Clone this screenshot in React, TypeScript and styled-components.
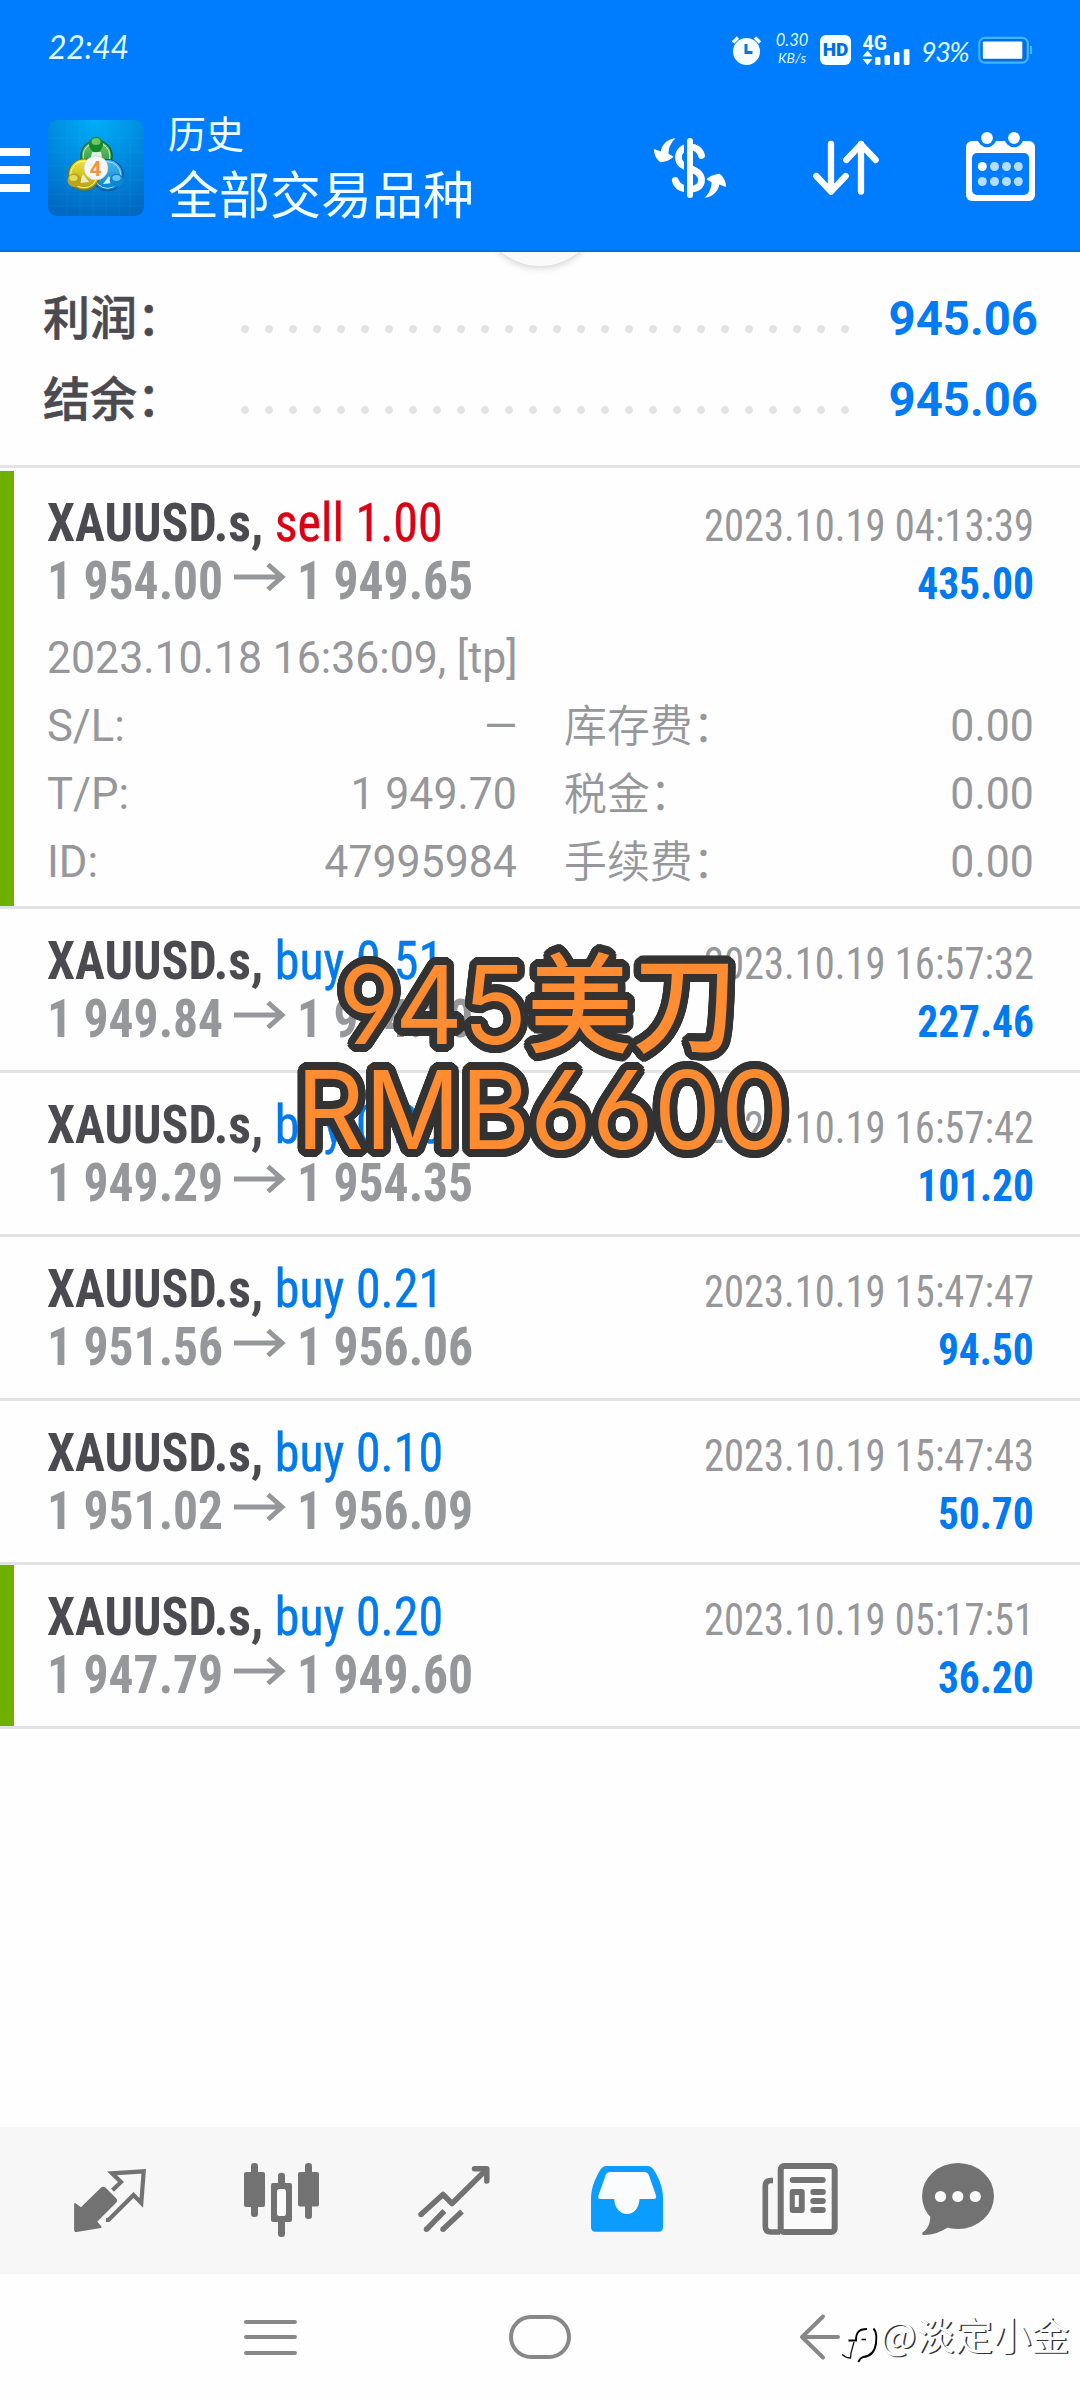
import React from 'react';
import styled, { createGlobalStyle } from 'styled-components';

const BLUE = '#007dff';
const INK = '#4b4a50';
const GREY = '#96979b';
const LINE = '#e3e3e3';
const TAB = '#727272';

const CJK = '"Noto Sans CJK SC", sans-serif';
const CONDENSED = '"Roboto Condensed", Roboto, sans-serif';

const Global = createGlobalStyle`
  * { box-sizing: border-box; }
  body { margin: 0; background: #fefefe; }
`;

const Screen = styled.div`
  position: relative;
  width: 1080px;
  height: 2400px;
  display: flex;
  flex-direction: column;
  overflow: hidden;
  background: #fefefe;
  font-family: Roboto, ${CJK};
  white-space: nowrap;
`;

/* ---------- header ---------- */

const Header = styled.header`
  position: relative;
  z-index: 2;
  height: 252px;
  flex: none;
  background: ${BLUE};
  color: #f0ffff;
  border-bottom: 2px solid #0070dc;
`;

const StatusBar = styled.div`
  height: 84px;
  padding: 16px 47px 0 48px;
  display: flex;
  align-items: center;
`;

const Clock = styled.span`
  flex: 1;
  padding-bottom: 6px;
  font: italic 400 32px/40px Lato, sans-serif;
  letter-spacing: -0.3px;
  color: #dcfaff;
`;

const NetSpeed = styled.div`
  width: 34px;
  margin: 0 11px 0 12px;
  padding-bottom: 2px;
  display: flex;
  flex-direction: column;
  align-items: center;
  font: italic 400 16.5px/18px Lato, sans-serif;
  color: #dcfaff;
`;

const SpeedUnit = styled.span`
  font-size: 14px;
`;

const Percent = styled.span`
  width: 49px;
  margin: 0 8px 0 9px;
  padding: 4px 0 0 1px;
  font: italic 400 27px/36px Lato, sans-serif;
  letter-spacing: -1.4px;
  color: #dcfaff;
`;

const HdBadge = styled.span`
  width: 31px;
  height: 30px;
  margin-right: 11px;
  display: flex;
  align-items: center;
  justify-content: center;
  border-radius: 6px;
  background: #f4ffff;
  color: #006fe0;
  font: 900 19px/30px Roboto, sans-serif;
`;

const AppBar = styled.div`
  height: 168px;
  padding-right: 29px;
  display: flex;
  align-items: center;
`;

const MenuButton = styled.div`
  width: 30px;
  margin: 4px 18px 0 0;
  display: flex;
  flex-direction: column;
  gap: 10px;
`;

const MenuBar = styled.span`
  height: 8px;
  background: #fff;
`;

const Titles = styled.div`
  flex: 1;
  margin-left: 24px;
  align-self: flex-start;
  padding-top: 23px;
  font-family: ${CJK};
`;

const Subtitle = styled.div`
  font-size: 38px;
  line-height: 50px;
`;

const Title = styled.div`
  margin-top: 3px;
  font-size: 51px;
  line-height: 64px;
`;

const Actions = styled.div`
  display: flex;
  gap: 55px;
`;

const PullKnob = styled.div`
  position: absolute;
  z-index: 1;
  left: 480px;
  top: 146px;
  width: 120px;
  height: 120px;
  border-radius: 50%;
  background: #fafafa;
  box-shadow: 0 2px 7px rgba(0, 0, 0, 0.18);
`;

/* ---------- summary ---------- */

const Summary = styled.section`
  height: 216px;
  padding: 22px 42px 0 43px;
  border-bottom: 3px solid ${LINE};
`;

const SummaryRow = styled.div`
  height: 81px;
  display: flex;
  align-items: center;
`;

const SummaryLabel = styled.span`
  width: 190px;
  font: 500 47px/81px ${CJK};
  color: ${INK};
  -webkit-text-stroke: 0.6px ${INK};
`;

const Dots = styled.span`
  width: 624px;
  height: 24px;
  margin-top: 29px;
  background: radial-gradient(circle at center, #e3e3e3 3.6px, transparent 4.3px) 0 0 / 24px 24px;
`;

const SummaryValue = styled.span`
  flex: 1;
  padding-top: 10px;
  text-align: right;
  font: 700 47.3px/71px Roboto, sans-serif;
  color: #007af5;
`;

/* ---------- deals ---------- */

const Deals = styled.main`
  flex: 1;
  padding-top: 3px;
`;

const Deal = styled.article<{ $marked?: boolean; $open?: boolean }>`
  padding: 23px 46px ${p => (p.$open ? 10 : 22)}px ${p => (p.$marked ? 33 : 47)}px;
  border-left: ${p => (p.$marked ? '14px solid #6eb000' : 'none')};
`;

const Divider = styled.div`
  height: 3px;
  background: ${LINE};
`;

const DealLine = styled.div`
  height: 58px;
  display: flex;
  justify-content: space-between;
  align-items: baseline;
`;

const Symbol = styled.span`
  font: 700 54px/58px ${CONDENSED};
  color: ${INK};
  transform: scaleX(0.926);
  transform-origin: left;
`;

const Order = styled.span<{ $side: string }>`
  font-weight: 400;
  -webkit-text-stroke: 0.4px;
  color: ${p => (p.$side === 'sell' ? '#dc0014' : '#007aec')};
`;

const Stamp = styled.span`
  font: 400 44px/44px ${CONDENSED};
  color: ${GREY};
  transform: scaleX(0.922);
  transform-origin: right;
`;

const Profit = styled.span`
  font: 700 44px/44px ${CONDENSED};
  color: #007af0;
  transform: scaleX(0.942);
  transform-origin: right;
`;

const Prices = styled.div`
  display: flex;
  align-items: baseline;
`;

const Price = styled.span`
  width: 187px;
  font: 700 54px/58px ${CONDENSED};
  color: ${GREY};
  transform: scaleX(0.918);
  transform-origin: left;
`;

const ArrowBox = styled.span`
  width: 63px;
  display: flex;
`;

const Details = styled.div`
  margin-top: 14px;
  display: grid;
  grid-template-columns: 470px 470px;
  grid-auto-rows: 68px;
  column-gap: 47px;
  font: 400 44px/68px Roboto, sans-serif;
  color: ${GREY};
`;

const Opened = styled.div`
  grid-column: 1 / -1;
  transform: scaleX(0.973);
  transform-origin: left;
`;

const Field = styled.div`
  height: 68px;
  display: flex;
  justify-content: space-between;
`;

const Key = styled.span<{ $cjk?: boolean }>`
  font-family: ${p => (p.$cjk ? CJK : 'Roboto, sans-serif')};
  font-weight: ${p => (p.$cjk ? 350 : 400)};
  line-height: ${p => (p.$cjk ? 62 : 68)}px;
  transform: scaleX(${p => (p.$cjk ? 0.975 : 0.99)});
  transform-origin: left;
`;

const Value = styled.span`
  transform: scaleX(0.973);
  transform-origin: right;
`;

/* ---------- bottom bars ---------- */

const Tabs = styled.nav`
  height: 147px;
  padding: 0 0 1px 60px;
  display: grid;
  grid-template-columns: 171px 172.5px 173px 173.5px 158px 100px;
  align-items: center;
  background: #f7f7f7;
`;

const NavBar = styled.footer`
  height: 126px;
  padding: 0 239px 0 240px;
  display: grid;
  grid-template-columns: 265px 292px 44px;
  align-items: center;
`;

/* ---------- overlays ---------- */

const ring = Array.from({ length: 32 }, (_, i) => {
  const a = (i / 32) * Math.PI * 2;
  return `${(Math.cos(a) * 7.7).toFixed(2)}px ${(Math.sin(a) * 7.7).toFixed(2)}px 0 #333`;
}).join(',');

const Caption = styled.div`
  position: absolute;
  z-index: 3;
  left: 0;
  top: 952px;
  width: 1080px;
  text-align: center;
  font: 400 108px/105px Inter, ${CJK};
  font-feature-settings: 'cv03', 'cv04';
  color: #ff8c30;
  text-shadow: ${ring};
`;

const CaptionLine = styled.div<{ $scale: number; $shift: number }>`
  height: 105px;
  transform: translateX(${p => p.$shift}px) scaleX(${p => p.$scale});
`;

const CaptionHan = styled.span`
  font-weight: 500;
`;

const Watermark = styled.div`
  position: absolute;
  z-index: 3;
  left: 839px;
  top: 2309px;
  display: flex;
  align-items: flex-start;
  gap: 1px;
  font: 400 38.3px/50px ${CJK};
  color: #fff;
  text-shadow: 1.5px 1px 0.5px #333;

  svg {
    margin-top: 11px;
  }
`;

/* ---------- drawings ---------- */

const Logo = () => (
  <svg width="96" height="96" viewBox="48 120 96 96">
    <defs>
      <radialGradient id="tile" cx="50%" cy="0%" r="100%">
        <stop offset="0" stopColor="#00aef8" />
        <stop offset="0.5" stopColor="#008be0" />
        <stop offset="1" stopColor="#0069c2" />
      </radialGradient>
      <linearGradient id="green" x1="0" y1="0" x2="0" y2="1">
        <stop offset="0" stopColor="#7cc878" />
        <stop offset="1" stopColor="#13862c" />
      </linearGradient>
      <linearGradient id="yellow" x1="0" y1="0" x2="0" y2="1">
        <stop offset="0" stopColor="#efe63c" />
        <stop offset="1" stopColor="#b5a00c" />
      </linearGradient>
      <linearGradient id="blue" x1="0" y1="0" x2="0" y2="1">
        <stop offset="0" stopColor="#4cb9f0" />
        <stop offset="1" stopColor="#0080cf" />
      </linearGradient>
    </defs>
    <rect x="48" y="120" width="96" height="96" rx="9" fill="url(#tile)" />
    <path
      d="M67 120v96M80 120v96M93 120v96M106 120v96M119 120v96M130 120v96M48 138h96M48 152h96M48 166h96M48 180h96M48 194h96M48 206h96"
      stroke="#3db8f5"
      strokeOpacity="0.14"
      strokeWidth="0.8"
    />
    <circle cx="96.5" cy="156" r="15.5" fill="url(#green)" stroke="#0a6a35" strokeWidth="1.5" />
    <circle cx="96.5" cy="156" r="13.4" fill="none" stroke="#d5f3d0" strokeWidth="0.9" />
    <circle cx="107.500" cy="175" r="15.500" fill="url(#blue)" stroke="#06589c" strokeWidth="1.2" />
    <circle cx="107.500" cy="175" r="13.300" fill="none" stroke="#b9e6ff" strokeWidth="0.9" />
    <path d="M103 184l6-8 4 7z" fill="#d4efff" />
    <circle cx="84" cy="174.500" r="15.500" fill="url(#yellow)" stroke="#6d7a20" strokeWidth="1.2" />
    <circle cx="84" cy="174.500" r="13.300" fill="none" stroke="#fbf9b0" strokeWidth="0.9" />
    <path d="M79 183l4-9 6 8z" fill="#e9efc0" />
    <path d="M92 152h9l1 5H91z" fill="#d8f3da" />
    <ellipse cx="96" cy="144.500" rx="7" ry="7.800" fill="#158a2c" />
    <ellipse cx="96" cy="141.500" rx="4.500" ry="3.500" fill="#6fc46b" />
    <circle cx="74.300" cy="180.300" r="6.800" fill="#b8a416" />
    <ellipse cx="73.500" cy="178" rx="4.200" ry="3" fill="#e3d95a" />
    <circle cx="116.500" cy="180.300" r="6.800" fill="#0b86cf" />
    <ellipse cx="116.500" cy="178" rx="4.200" ry="3" fill="#62c2ee" />
    <circle cx="96" cy="168" r="12" fill="#f7f7f7" stroke="#c9c9c9" strokeWidth="0.6" />
    <text x="95.500" y="175.500" textAnchor="middle" fontFamily="Roboto, sans-serif" fontWeight="700" fontSize="21" fill="#f5923e">
      4
    </text>
  </svg>
);

const AlarmIcon = () => (
  <svg width="32" height="32" viewBox="730.5 35 32 32">
    <circle cx="746" cy="52.500" r="13.500" fill="#f4ffff" />
    <path d="M732.500 43.500l5-5M759.500 43.500l-5-5" stroke="#f4ffff" strokeWidth="3.400" />
    <path d="M745.500 45v8.500h6.500" stroke="#0a74dd" strokeWidth="3" fill="none" />
  </svg>
);

const SignalIcon = () => (
  <svg width="49" height="48" viewBox="862 27 49 48" fill="#f4ffff">
    <text x="862.500" y="50.500" fontFamily="Roboto, sans-serif" fontWeight="700" fontSize="19.500">
      4G
    </text>
    <path d="M867.500 51.500l5 6h-10zM867.500 66l5-6h-10z" />
    <rect x="875" y="58" width="5.500" height="8" rx="1.500" />
    <rect x="884.500" y="56" width="5.500" height="10" rx="1.500" />
    <rect x="894" y="53" width="5.500" height="13" rx="1.500" />
    <rect x="903.800" y="50" width="5.700" height="16" rx="1.500" />
  </svg>
);

const BatteryIcon = () => (
  <svg width="56" height="30" viewBox="977 37.500 56 30">
    <rect x="979.300" y="40.300" width="48.500" height="24.800" rx="5.500" fill="#0070e0" stroke="#3fb6ff" strokeWidth="2.200" />
    <rect x="982.800" y="44" width="39.500" height="17.200" rx="1" fill="#fff" />
    <path d="M1031 48.500v8" stroke="#3fb6ff" strokeWidth="2.200" />
  </svg>
);

const SWAP_HEAD =
  'M675.5 138.2C667 139 661.5 145 660.8 151.5L654 149C653.5 154 657 160 660.5 162.3C665 161.5 670 160.5 673.5 156.7L668.5 153.8C668.5 147.5 671 142.5 675.5 138.2Z';

const DollarIcon = () => (
  <svg width="100" height="100" viewBox="641 118 100 100" fill="#fff">
    <path
      d="M701.500 155.500C700 150 695.500 146.800 690 146.800C683 146.800 678.500 151.500 678.500 157.500C678.500 164 683.500 166.300 690 168.500C697.500 171 701.500 174 701.500 180C701.500 186 697 189.200 690 189.200C683 189.200 677 186.500 675.300 180.500"
      fill="none"
      stroke="#fff"
      strokeWidth="6.800"
      strokeLinecap="round"
    />
    <path d="M685.500 142v54" stroke={BLUE} strokeWidth="3" />
    <path d="M690 141v54" stroke="#fff" strokeWidth="6" strokeLinecap="round" />
    <path d={SWAP_HEAD} />
    <path transform="rotate(180 690 168)" d={SWAP_HEAD} />
  </svg>
);

const SortIcon = () => (
  <svg width="100" height="100" viewBox="796 118 100 100" fill="none" stroke="#fff" strokeWidth="6.300" strokeLinecap="round" strokeLinejoin="round">
    <path d="M831 144v47.500M816.300 176l14.700 15.700L845.700 176" />
    <path d="M861 191.500V144M846.300 160l14.700-15.700L875.700 160" />
  </svg>
);

const CalendarIcon = () => (
  <svg width="100" height="100" viewBox="951 118 100 100">
    <rect x="966" y="141" width="69" height="60" rx="6" fill="#fff" />
    <circle cx="987" cy="138" r="9.300" fill={BLUE} />
    <circle cx="1014" cy="138" r="9.300" fill={BLUE} />
    <circle cx="987" cy="138" r="5.900" fill="#fff" />
    <circle cx="1014" cy="138" r="5.900" fill="#fff" />
    <rect x="972" y="153" width="57" height="42" rx="5" fill={BLUE} />
    {[166.5, 181.5].map(y =>
      [982.3, 994.5, 1006.5, 1018.3].map(x => (
        <circle key={`${x}-${y}`} cx={x} cy={y} r="4.500" fill={x < 983 && y < 170 ? '#fff' : '#b5ddff'} />
      )),
    )}
  </svg>
);

const PriceArrow = () => (
  <svg width="52" height="38" viewBox="0 0 52 38" fill="none" stroke={GREY} strokeWidth="5">
    <path d="M0 16H48M34 3.500L48 16L34 28.500" />
  </svg>
);

const QuotesIcon = () => (
  <svg width="100" height="100" viewBox="60 2150 100 100">
    <path
      d="M75 2204L81 2208.500L101.500 2188.500Q103.300 2187 105 2188.500L115.500 2199Q117 2200.300 115.500 2202L96 2221.500L100.700 2227L76.500 2231.200Q75 2231.200 75 2229.500Z"
      fill={TAB}
      stroke={TAB}
      strokeWidth="1.800"
      strokeLinejoin="round"
    />
    <path d="M112.500 2190.200L121 2182L112 2173.300L143.700 2171.300L141.300 2203L133.500 2195L108.500 2220H106" fill="none" stroke={TAB} strokeWidth="4.200" />
  </svg>
);

const CandlesIcon = () => (
  <svg width="100" height="100" viewBox="231 2150 100 100" fill={TAB}>
    <rect x="251" y="2163" width="7" height="54" rx="3.200" />
    <rect x="244" y="2172" width="21" height="35" rx="2" />
    <rect x="278" y="2172.700" width="7" height="64.300" rx="3.200" />
    <rect x="271" y="2183" width="21" height="39" rx="2" />
    <rect x="277" y="2189" width="9" height="27" rx="2.500" fill="#fcfcfc" />
    <rect x="305" y="2163" width="7" height="56" rx="3.200" />
    <rect x="298" y="2172" width="21" height="34.500" rx="2" />
  </svg>
);

const TrendIcon = () => (
  <svg width="100" height="100" viewBox="403.500 2150 100 100" fill="none" stroke={TAB} strokeWidth="5.500">
    <path d="M420.500 2214.500L442.500 2194.500L451.500 2203.500L486 2169.500" strokeLinejoin="round" />
    <circle cx="420.500" cy="2214.500" r="2.700" fill={TAB} stroke="none" />
    <path d="M474 2168.800H486.300V2181" strokeLinecap="round" strokeLinejoin="round" />
    <path d="M426 2229.300L443.900 2211M442.500 2229.300L461.500 2211.500" />
    <circle cx="426" cy="2229.300" r="2.700" fill={TAB} stroke="none" />
    <circle cx="442.500" cy="2229.300" r="2.700" fill={TAB} stroke="none" />
  </svg>
);

const InboxIcon = () => (
  <svg width="100" height="100" viewBox="576.500 2150 100 100">
    <path
      d="M590.500 2198C590.500 2187 596 2176 600 2169.500Q602.300 2166 606 2166H647Q650.500 2166 653 2169.500C657.500 2176 662.500 2187 662.500 2198V2227Q662.500 2231.700 658 2231.700H595Q590.500 2231.700 590.500 2227Z"
      fill="#0a9dff"
    />
    <path
      d="M610 2172H643.500Q647 2172 648.300 2175L655.500 2195.500Q656.500 2199 653 2199H639C638.800 2208 633 2214 626.500 2214S614 2208 613.700 2199H600Q597 2199 598 2195.500L605.200 2175Q606.500 2172 610 2172Z"
      fill="#fbfcfd"
    />
  </svg>
);

const NewsIcon = () => (
  <svg width="100" height="100" viewBox="750 2150 100 100" fill={TAB}>
    <rect x="780.700" y="2166" width="54" height="66" rx="3.500" fill="#fbfbfb" stroke={TAB} strokeWidth="6" />
    <path d="M773 2180.500H771Q765.300 2180.500 765.300 2186V2226Q765.300 2232 771 2232H780" fill="none" stroke={TAB} strokeWidth="5.600" />
    <rect x="789.700" y="2177" width="36" height="6" rx="3" />
    <rect x="789.700" y="2189" width="15" height="24" rx="3" />
    <rect x="794.800" y="2195" width="4" height="12" fill="#fbfbfb" />
    <rect x="810.300" y="2189" width="15.500" height="6" rx="3" />
    <rect x="810.300" y="2198" width="15.500" height="6" rx="3" />
    <rect x="810.300" y="2207" width="15.500" height="6" rx="3" />
  </svg>
);

const ChatIcon = () => (
  <svg width="100" height="100" viewBox="908 2150 100 100" fill={TAB}>
    <ellipse cx="958" cy="2196" rx="36" ry="33" />
    <path d="M930.300 2217C930 2224 927.500 2229.500 922.500 2232.500Q921.500 2235 924 2235C933 2235 940.500 2232 948 2227.500L945 2215Z" />
    {[940.5, 957.8, 975.3].map(x => (
      <circle key={x} cx={x} cy="2196.500" r="5.600" fill="#fafafa" />
    ))}
  </svg>
);

const WatermarkLogo = () => (
  <svg width="40" height="46" viewBox="838 2320 40 46" fill="none">
    <path d="M842 2355q6 1 9-3l4-16q3-9 12-9q7 3 7 12q0 15-14 18" stroke="#fff" strokeWidth="6" />
    <path d="M847.500 2340.500h7.500c0-7 2-11.500 11-11.500" stroke="#000" strokeWidth="1.900" />
    <path d="M872.500 2328.500c3.500 4 3 9 2.500 15c-1.500 9.500-6 13-13 13.500q-3.500 1.500-4.500 5" stroke="#000" strokeWidth="1.900" />
    <path d="M841 2354.500q4 3.500 8.500 3.500l.5-5l3-11" stroke="#111" strokeWidth="1.300" />
    <path d="M860.500 2339.500h4.500" stroke="#000" strokeWidth="1.600" />
  </svg>
);

/* ---------- content ---------- */

type DealData = {
  side: 'buy' | 'sell';
  volume: string;
  from: string;
  to: string;
  time: string;
  profit: string;
  marked?: boolean;
  details?: boolean;
};

const deals: DealData[] = [
  { side: 'sell', volume: '1.00', from: '1 954.00', to: '1 949.65', time: '2023.10.19 04:13:39', profit: '435.00', marked: true, details: true },
  { side: 'buy', volume: '0.51', from: '1 949.84', to: '1 954.30', time: '2023.10.19 16:57:32', profit: '227.46' },
  { side: 'buy', volume: '0.20', from: '1 949.29', to: '1 954.35', time: '2023.10.19 16:57:42', profit: '101.20' },
  { side: 'buy', volume: '0.21', from: '1 951.56', to: '1 956.06', time: '2023.10.19 15:47:47', profit: '94.50' },
  { side: 'buy', volume: '0.10', from: '1 951.02', to: '1 956.09', time: '2023.10.19 15:47:43', profit: '50.70' },
  { side: 'buy', volume: '0.20', from: '1 947.79', to: '1 949.60', time: '2023.10.19 05:17:51', profit: '36.20', marked: true },
];

const fields: [string, string, string, string][] = [
  ['S/L:', '—', '库存费：', '0.00'],
  ['T/P:', '1 949.70', '税金：', '0.00'],
  ['ID:', '47995984', '手续费：', '0.00'],
];

const DealCard = ({ deal }: { deal: DealData }) => (
  <>
    <Deal $marked={deal.marked} $open={deal.details}>
      <DealLine>
        <Symbol>
          XAUUSD.s, <Order $side={deal.side}>{deal.side} {deal.volume}</Order>
        </Symbol>
        <Stamp>{deal.time}</Stamp>
      </DealLine>
      <DealLine>
        <Prices>
          <Price>{deal.from}</Price>
          <ArrowBox>
            <PriceArrow />
          </ArrowBox>
          <Price>{deal.to}</Price>
        </Prices>
        <Profit>{deal.profit}</Profit>
      </DealLine>
      {deal.details && (
        <Details>
          <Opened>2023.10.18 16:36:09, [tp]</Opened>
          {fields.map(([k1, v1, k2, v2]) => (
            <React.Fragment key={k1}>
              <Field>
                <Key>{k1}</Key>
                <Value>{v1}</Value>
              </Field>
              <Field>
                <Key $cjk>{k2}</Key>
                <Value>{v2}</Value>
              </Field>
            </React.Fragment>
          ))}
        </Details>
      )}
    </Deal>
    <Divider />
  </>
);

export default function App() {
  return (
    <Screen>
      <Global />
      <Header>
        <StatusBar>
          <Clock>22:44</Clock>
          <AlarmIcon />
          <NetSpeed>
            <span>0.30</span>
            <SpeedUnit>KB/s</SpeedUnit>
          </NetSpeed>
          <HdBadge>HD</HdBadge>
          <SignalIcon />
          <Percent>93%</Percent>
          <BatteryIcon />
        </StatusBar>
        <AppBar>
          <MenuButton>
            <MenuBar />
            <MenuBar />
            <MenuBar />
          </MenuButton>
          <Logo />
          <Titles>
            <Subtitle>历史</Subtitle>
            <Title>全部交易品种</Title>
          </Titles>
          <Actions>
            <DollarIcon />
            <SortIcon />
            <CalendarIcon />
          </Actions>
        </AppBar>
      </Header>
      <PullKnob />
      <Summary>
        {['利润：', '结余：'].map(label => (
          <SummaryRow key={label}>
            <SummaryLabel>{label}</SummaryLabel>
            <Dots />
            <SummaryValue>945.06</SummaryValue>
          </SummaryRow>
        ))}
      </Summary>
      <Deals>
        {deals.map(deal => (
          <DealCard key={deal.time} deal={deal} />
        ))}
      </Deals>
      <Tabs>
        <QuotesIcon />
        <CandlesIcon />
        <TrendIcon />
        <InboxIcon />
        <NewsIcon />
        <ChatIcon />
      </Tabs>
      <NavBar>
        <svg width="60" height="50" viewBox="240 2312 60 50" stroke="#888" strokeWidth="4" strokeLinecap="round">
          <path d="M246 2322h49M246 2337h49M246 2353h49" />
        </svg>
        <svg width="70" height="50" viewBox="505 2312 70 50" fill="none" stroke="#888" strokeWidth="4">
          <rect x="511" y="2317" width="58" height="40" rx="20" />
        </svg>
        <svg width="44" height="50" viewBox="797 2312 44 50" fill="none" stroke="#888" strokeWidth="4" strokeLinecap="round" strokeLinejoin="round">
          <path d="M823 2316.500L802 2337L823 2357.500M802 2337h36" />
        </svg>
      </NavBar>
      <Caption>
        <CaptionLine $scale={0.975} $shift={-2}>
          945<CaptionHan>美刀</CaptionHan>
        </CaptionLine>
        <CaptionLine $scale={0.985} $shift={2}>RMB6600</CaptionLine>
      </Caption>
      <Watermark>
        <WatermarkLogo />
        <span>@淡定小金</span>
      </Watermark>
    </Screen>
  );
}
